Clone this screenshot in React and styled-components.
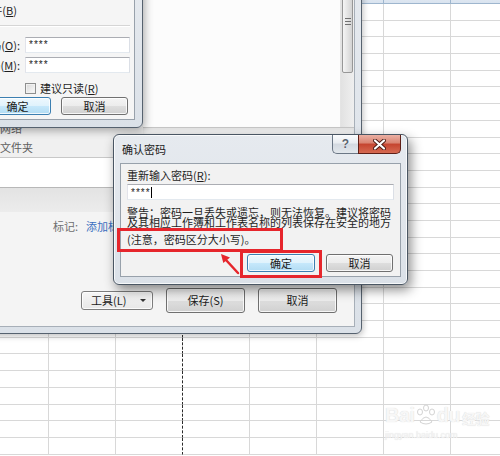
import React from 'react';
import styled, { createGlobalStyle } from 'styled-components';

const GlobalStyle = createGlobalStyle`
  html, body { margin: 0; padding: 0; }
  body {
    width: 500px; height: 456px; overflow: hidden; background: #fff;
    font-family: "Noto Sans CJK SC", "Microsoft YaHei", sans-serif;
    font-size: 11px; color: #1e1e1e;
  }
  * { box-sizing: border-box; }
`;

const Page = styled.div`
  position: relative;
  width: 500px;
  height: 456px;
  overflow: hidden;
  background: #fff;
`;

/* ---------- spreadsheet ---------- */
const Sheet = styled.div`
  display: grid;
  grid-template-columns: repeat(8, 67px);
  grid-template-rows: 20px repeat(27, 16.7px);
  margin: -16px 0 0 -18px;
`;

const HeadCell = styled.div`
  display: flex;
  align-items: flex-end;
  justify-content: center;
  padding-bottom: 3px;
  background: linear-gradient(#f6f9fc, #d9e3ef);
  border-right: 1px solid #9eb6ce;
  border-bottom: 1px solid #9eb6ce;
  color: #27413e;
  font-family: "Liberation Sans", sans-serif;
  font-size: 11px;
  line-height: 11px;
`;

const Cell = styled.div`
  border-right: 1px ${p => (p.$pageBreak ? 'dashed #2b2b2b' : 'solid #d8d8d8')};
  border-bottom: 1px solid #d8d8d8;
`;

/* ---------- window frames ---------- */
const Frame = styled.div`
  position: absolute;
  display: flex;
  flex-direction: column;
  border: 1px solid #56626f;
  background: linear-gradient(180deg, #e6eaef 0%, #dbe1e8 100%);
`;

const SaveWindow = styled(Frame)`
  left: -100px;
  top: -100px;
  width: 462px;
  height: 434px;
  padding: 0 6px 6px 0;
  border-radius: 0 0 6px 0;
  box-shadow: 1px 2px 6px rgba(0, 0, 0, 0.25);
`;

const OptionsWindow = styled(Frame)`
  left: -150px;
  top: -30px;
  width: 293px;
  height: 158px;
  padding: 0 7px 7px 7px;
  border-radius: 0 0 6px 6px;
  box-shadow: 2px 3px 8px rgba(0, 0, 0, 0.3);
`;

const ConfirmWindow = styled(Frame)`
  left: 113px;
  top: 134px;
  width: 295px;
  height: 151px;
  padding: 0 6px 7px 6px;
  border-color: #4a5663;
  border-radius: 6px;
  box-shadow: inset 0 0 0 1px rgba(255, 255, 255, 0.75), 3px 5px 12px rgba(0, 0, 0, 0.45);
`;

const TitleBar = styled.div`
  display: flex;
  height: 28px;
  flex: none;
  padding-left: 2px;
`;

const TitleText = styled.span`
  align-self: center;
  color: #1b1b1b;
  font-size: 11px;
  line-height: 14px;
  margin-right: auto;
`;

const CaptionGroup = styled.div`
  display: flex;
  align-self: flex-start;
  height: 19px;
`;

const HelpButton = styled.div`
  width: 26px;
  height: 19px;
  display: flex;
  align-items: center;
  justify-content: center;
  border: 1px solid #6b7785;
  border-top: none;
  border-right: none;
  border-radius: 0 0 0 5px;
  background: linear-gradient(#fbfcfd 0%, #e8ecf0 45%, #d3d9e0 50%, #e2e7ec 100%);
  color: #5a646f;
  font-family: "Liberation Sans", sans-serif;
  font-weight: bold;
  font-size: 12px;
  text-shadow: 0 0 1px #fff;
`;

const CloseButton = styled.div`
  width: 43px;
  height: 19px;
  display: flex;
  align-items: center;
  justify-content: center;
  border: 1px solid #5e1f17;
  border-top: none;
  border-radius: 0 0 5px 0;
  background: linear-gradient(#ebb0a3 0%, #d98371 45%, #c5442f 50%, #d66a52 100%);
`;

const Panel = styled.div`
  flex: 1;
  display: flex;
  flex-direction: column;
  background: #f2f2f2;
  border: 1px solid #98a1ab;
`;

/* ---------- common controls ---------- */
const WinButton = styled.button`
  width: ${p => p.$w}px;
  height: ${p => p.$h}px;
  flex: none;
  padding: 0;
  display: flex;
  align-items: center;
  justify-content: center;
  border: 1px solid ${p => (p.$default ? '#3c7fb1' : '#707070')};
  border-radius: 3px;
  background: ${p =>
    p.$default
      ? 'linear-gradient(#eef8fe 0%, #dff2fc 50%, #c6e8fb 51%, #b2dcf3 100%)'
      : 'linear-gradient(#f4f4f4 0%, #ececec 50%, #dedede 51%, #d0d0d0 100%)'};
  box-shadow: inset 0 0 0 1px rgba(255, 255, 255, 0.8);
  font-family: "Noto Sans CJK SC", sans-serif;
  font-size: 11px;
  line-height: 1;
  color: #1b1b1b;
`;

const Mn = styled.span`
  text-decoration: underline;
`;

const TextBox = styled.div`
  height: 16px;
  width: ${p => (p.$w ? `${p.$w}px` : '100%')};
  flex: none;
  display: flex;
  align-items: center;
  padding-left: 3px;
  background: #fff;
  border: 1px solid #abadb3;
  border-color: #abadb3 #dbdfe6 #e3e9ef #e2e3ea;
  font-family: "Liberation Sans", sans-serif;
  font-size: 10px;
  letter-spacing: 1px;
  color: #222;
`;

const Caret = styled.span`
  width: 1px;
  height: 11px;
  background: #000;
`;

const CheckBox = styled.span`
  width: 11px;
  height: 11px;
  flex: none;
  border: 1px solid #8e8f8f;
  background: linear-gradient(135deg, #d8d8d8, #fbfbfb);
  box-shadow: inset 0 0 0 1px #f1f1f1;
`;

/* ---------- save dialog body ---------- */
const SaveBody = styled.div`
  flex: 1;
  display: flex;
  flex-direction: column;
  background: #f3f3f3;
  border-right: 1px solid #a7afb8;
  border-bottom: 1px solid #a7afb8;
  overflow: hidden;
`;

const TopRegion = styled.div`
  display: flex;
  height: 256px;
  flex: none;
`;

const NavPane = styled.div`
  width: 242px;
  flex: none;
  display: flex;
  flex-direction: column;
  justify-content: flex-end;
  padding: 0 0 2px 99px;
  background: #f0f0f0;
`;

const NavItem = styled.div`
  line-height: ${p => p.$lh}px;
  margin-top: ${p => p.$mt || 0}px;
  color: #5e5e5e;
  white-space: nowrap;
`;

const BrowserColumn = styled.div`
  flex: 1;
  display: flex;
  flex-direction: column;
`;

const FileRow = styled.div`
  flex: 1;
  display: flex;
`;

const FileList = styled.div`
  flex: 1;
  background: #fcfcfc;
`;

const ScrollBar = styled.div`
  width: 14px;
  flex: none;
  padding: 68px 1px 0;
  background: linear-gradient(90deg, #e2e2e2, #efefef);
  border-left: 1px solid #e4e4e4;
`;

const Thumb = styled.div`
  height: 104px;
  display: flex;
  align-items: center;
  justify-content: center;
  border: 1px solid #979797;
  border-radius: 2px;
  background: linear-gradient(90deg, #f5f5f5, #e4e4e4 50%, #d3d3d3);
`;

const Grip = styled.div`
  width: 6px;
  height: 7px;
  border-top: 1px solid #707070;
  border-bottom: 1px solid #707070;
  position: relative;
  &::after {
    content: '';
    position: absolute;
    left: 0;
    right: 0;
    top: 2px;
    border-top: 1px solid #707070;
  }
`;

const Strip = styled.div`
  height: 30px;
  flex: none;
  background: #f0f0f0;
  border-top: 1px solid #c6c6c6;
  box-shadow: inset 0 2px 3px rgba(0, 0, 0, 0.06);
`;

const FieldBox = styled.div`
  height: 31px;
  flex: none;
  background: #fff;
  border-top: 1px solid #c8c8c8;
  border-bottom: 1px solid #b8b8b8;
`;

const Band = styled.div`
  height: 24px;
  flex: none;
  background: linear-gradient(#e3e3e3, #ececec);
`;

const Lower = styled.div`
  flex: 1;
  display: flex;
  flex-direction: column;
  background: #f4f4f4;
`;

const TagRow = styled.div`
  display: flex;
  gap: 8px;
  padding: 7px 0 0 152px;
  line-height: 14px;
  white-space: nowrap;
`;

const TagLabel = styled.span`
  color: #6f6f6f;
`;

const TagLink = styled.span`
  color: #3c6fc0;
`;

const ActionRow = styled.div`
  margin-top: auto;
  display: flex;
  justify-content: flex-end;
  align-items: center;
  gap: 13px;
  padding: 0 17px 13px 0;
`;

const ToolButton = styled(WinButton)`
  justify-content: flex-start;
  padding-left: 9px;
  border-color: #7d7d7d;
  background: linear-gradient(#f6f6f6, #e7e7e7);
`;

const DropArrow = styled.span`
  margin-left: auto;
  margin-right: 6px;
  width: 0;
  height: 0;
  border-left: 3px solid transparent;
  border-right: 3px solid transparent;
  border-top: 3px solid #333;
`;

/* ---------- options dialog body ---------- */
const OptionsPanel = styled(Panel)`
  padding: 3px 4px 4px 0;
  background: #f5f5f5;
`;

const RightRow = styled.div`
  display: flex;
  justify-content: flex-end;
  align-items: center;
  gap: ${p => p.$gap || 0}px;
  margin-top: ${p => p.$mt || 0}px;
  margin-right: ${p => p.$mr || 0}px;
  height: ${p => p.$h}px;
  white-space: nowrap;
  line-height: 14px;
`;

const CheckLabel = styled.label`
  display: flex;
  align-items: center;
  gap: 4px;
  width: ${p => (p.$w ? `${p.$w}px` : 'auto')};
  white-space: nowrap;
`;

const Separator = styled.div`
  margin-top: 8px;
  height: 2px;
  border-top: 1px solid #d5d5d5;
  border-bottom: 1px solid #ffffff;
`;

/* ---------- confirm dialog body ---------- */
const ConfirmPanel = styled(Panel)`
  padding: 4px 6px 4px 6px;
`;

const FieldLabel = styled.div`
  line-height: 14px;
  white-space: nowrap;
`;

const InputWrap = styled.div`
  margin-top: 2px;
`;

const Warning = styled.div`
  margin-top: ${p => p.$mt}px;
  line-height: ${p => p.$lh}px;
  height: ${p => p.$lh}px;
  white-space: nowrap;
  color: #1e1e1e;
`;

const ButtonRow = styled.div`
  margin-top: 9px;
  display: flex;
  justify-content: flex-end;
  gap: 11px;
  padding-right: 1px;
`;

/* ---------- annotations ---------- */
const RedBox = styled.div`
  position: absolute;
  left: ${p => p.$x}px;
  top: ${p => p.$y}px;
  width: ${p => p.$w}px;
  height: ${p => p.$h}px;
  border: 3px solid #e6262c;
`;

const ArrowSvg = styled.svg`
  position: absolute;
  left: 215px;
  top: 250px;
`;

const Watermark = styled.div`
  position: absolute;
  left: 385px;
  top: 400px;
  display: flex;
  flex-direction: column;
  align-items: flex-start;
  pointer-events: none;
  white-space: nowrap;
`;

const WatermarkLogo = styled.div`
  display: flex;
  align-items: flex-end;
  color: #f7f7f7;
  text-shadow: 0 0 1px #d0d0d0;
  font-family: "Liberation Sans", sans-serif;
  font-weight: bold;
  font-size: 20px;
  line-height: 30px;
  letter-spacing: -0.5px;
`;

const WatermarkCn = styled.span`
  font-family: "Noto Sans CJK SC", sans-serif;
  font-size: 14px;
  line-height: 24px;
  margin-left: 2px;
`;

const WatermarkUrl = styled.div`
  font-family: "Liberation Sans", sans-serif;
  font-size: 9px;
  line-height: 10px;
  color: #f4f4f4;
  text-shadow: 0 0 1px #dcdcdc;
`;

export default function App() {
  const cols = ['A', 'B', 'C', 'D', 'E', 'F', 'G', 'H'];
  const rows = Array.from({ length: 27 }, (_, i) => i);

  return (
    <>
      <GlobalStyle />
      <Page>
        <Sheet>
          {cols.map(c => (
            <HeadCell key={c}>{c}</HeadCell>
          ))}
          {rows.map(r =>
            cols.map((c, i) => <Cell key={`${r}-${c}`} $pageBreak={i === 2} />)
          )}
        </Sheet>

        <Watermark>
          <WatermarkLogo>
            Bai
            <svg width="22" height="26" viewBox="0 0 22 26">
              <g fill="none" stroke="#d4d4d4" strokeWidth="1">
                <ellipse cx="5" cy="8" rx="2.5" ry="3" />
                <ellipse cx="11" cy="4" rx="2.5" ry="3" />
                <ellipse cx="17" cy="8" rx="2.5" ry="3" />
                <path d="M5 18 Q11 8 17 18 Q11 22 5 18 Z" />
              </g>
            </svg>
            du
            <WatermarkCn>经验</WatermarkCn>
          </WatermarkLogo>
          <WatermarkUrl>jingyan.baidu.com</WatermarkUrl>
        </Watermark>

        <SaveWindow>
          <SaveBody>
            <TopRegion>
              <NavPane>
                <NavItem $lh={14}>网络</NavItem>
                <NavItem $lh={16} $mt={4}>文件夹</NavItem>
              </NavPane>
              <BrowserColumn>
                <FileRow>
                  <FileList />
                  <ScrollBar>
                    <Thumb>
                      <Grip />
                    </Thumb>
                  </ScrollBar>
                </FileRow>
                <Strip />
              </BrowserColumn>
            </TopRegion>
            <FieldBox />
            <Band />
            <Lower>
              <TagRow>
                <TagLabel>标记:</TagLabel>
                <TagLink>添加标记</TagLink>
              </TagRow>
              <ActionRow>
                <ToolButton $w={72} $h={19}>
                  工具(L)
                  <DropArrow />
                </ToolButton>
                <WinButton $w={79} $h={25}>保存(S)</WinButton>
                <WinButton $w={79} $h={25}>取消</WinButton>
              </ActionRow>
            </Lower>
          </SaveBody>
        </SaveWindow>

        <OptionsWindow>
          <TitleBar>
            <TitleText>常规选项</TitleText>
          </TitleBar>
          <OptionsPanel>
            <RightRow $h={14} $mr={113}>
              <CheckLabel>
                <CheckBox />
                <span>
                  生成备份文件(<Mn>B</Mn>)
                </span>
              </CheckLabel>
            </RightRow>
            <Separator />
            <RightRow $h={16} $mt={10} $gap={5}>
              <span>
                打开权限密码(<Mn>O</Mn>):
              </span>
              <TextBox $w={105}>****</TextBox>
            </RightRow>
            <RightRow $h={16} $mt={4} $gap={5}>
              <span>
                修改权限密码(<Mn>M</Mn>):
              </span>
              <TextBox $w={105}>****</TextBox>
            </RightRow>
            <RightRow $h={14} $mt={8}>
              <CheckLabel $w={105}>
                <CheckBox />
                <span>
                  建议只读(<Mn>R</Mn>)
                </span>
              </CheckLabel>
            </RightRow>
            <RightRow $h={18} $mt={2} $gap={10} $mr={2}>
              <WinButton $w={67} $h={18} $default>确定</WinButton>
              <WinButton $w={67} $h={18}>取消</WinButton>
            </RightRow>
          </OptionsPanel>
        </OptionsWindow>

        <ConfirmWindow>
          <TitleBar>
            <TitleText>确认密码</TitleText>
            <CaptionGroup>
              <HelpButton>?</HelpButton>
              <CloseButton>
                <svg width="13" height="11" viewBox="0 0 13 11">
                  <path d="M2 1.5 L11 9.5 M11 1.5 L2 9.5" stroke="#4a1a12" strokeWidth="4" strokeLinecap="round" />
                  <path d="M2 1.5 L11 9.5 M11 1.5 L2 9.5" stroke="#ffffff" strokeWidth="2.2" strokeLinecap="round" />
                </svg>
              </CloseButton>
            </CaptionGroup>
          </TitleBar>
          <ConfirmPanel>
            <FieldLabel>
              重新输入密码(<Mn>R</Mn>):
            </FieldLabel>
            <InputWrap>
              <TextBox>
                ****
                <Caret />
              </TextBox>
            </InputWrap>
            <Warning $mt={7} $lh={10}>警告：密码一旦丢失或遗忘，则无法恢复。建议将密码</Warning>
            <Warning $mt={0} $lh={10}>及其相应工作簿和工作表名称的列表保存在安全的地方</Warning>
            <Warning $mt={7} $lh={11}>(注意，密码区分大小写)。</Warning>
            <ButtonRow>
              <WinButton $w={68} $h={18} $default>确定</WinButton>
              <WinButton $w={67} $h={18}>取消</WinButton>
            </ButtonRow>
          </ConfirmPanel>
        </ConfirmWindow>

        <RedBox $x={117} $y={228} $w={166} $h={24} />
        <RedBox $x={240} $y={250} $w={82} $h={28} />
        <ArrowSvg width="30" height="30" viewBox="0 0 30 30">
          <path d="M23 23 L11 10" stroke="#e6262c" strokeWidth="2.5" strokeLinecap="round" />
          <polygon points="6,4 15,7.4 8.3,13" fill="#e6262c" />
        </ArrowSvg>
      </Page>
    </>
  );
}
